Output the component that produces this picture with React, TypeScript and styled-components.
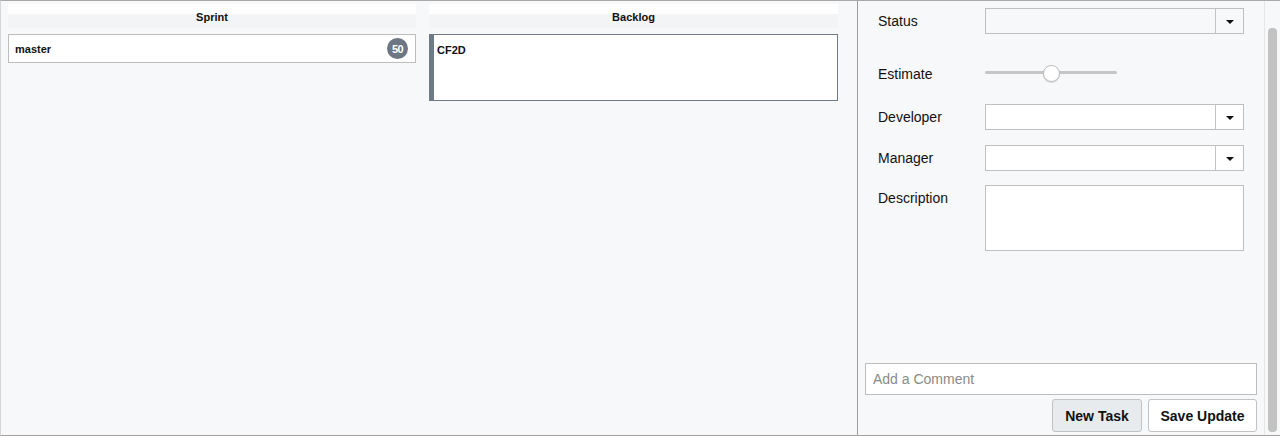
import React from "react";
import styled, { createGlobalStyle } from "styled-components";

const Global = createGlobalStyle`
  html, body { margin: 0; padding: 0; background: #f7f8fa; }
  body { font-family: "Liberation Sans", Arial, Helvetica, sans-serif; color: #111; }
  * { box-sizing: border-box; }
`;

const Frame = styled.div`
  width: 1280px;
  height: 436px;
  display: flex;
  border-top: 1px solid #a9a9a9;
  border-bottom: 1px solid #a3a3a3;
  border-left: 1px solid #d6d6d6;
  background: #f7f8fa;
  overflow: hidden;
`;

const Board = styled.div`
  width: 857px;
  flex: none;
  display: grid;
  grid-template-columns: 408px 409px;
  column-gap: 13px;
  align-content: start;
  padding: 3px 7px;
  border-right: 1px solid #9c9c9c;
`;

const Column = styled.div`
  display: flex;
  flex-direction: column;
  gap: 6px;
`;

const ColumnHeader = styled.div`
  height: 24px;
  display: flex;
  align-items: center;
  justify-content: center;
  padding-top: 2px;
  font-size: 11px;
  font-weight: bold;
  background: linear-gradient(#ffffff 0, #ffffff 42%, #f3f4f6 42%, #f3f4f6 100%);
`;

const Card = styled.div<{ $accent?: boolean; $tall?: boolean }>`
  display: flex;
  align-items: ${(p) => (p.$tall ? "flex-start" : "center")};
  justify-content: space-between;
  height: ${(p) => (p.$tall ? "67px" : "29px")};
  background: #fff;
  border: 1px solid ${(p) => (p.$accent ? "#6e7b87" : "#bdbdbd")};
  border-left: ${(p) => (p.$accent ? "5px solid #6e7b87" : "1px solid #bdbdbd")};
  padding: ${(p) => (p.$tall ? "9px 8px 0 3px" : "0 7px 0 6px")};
  font-size: 11px;
  font-weight: bold;
`;

const Badge = styled.span`
  width: 21px;
  height: 21px;
  border-radius: 50%;
  background: #6c7783;
  color: #fff;
  font-size: 11px;
  font-weight: bold;
  display: flex;
  align-items: center;
  justify-content: center;
  letter-spacing: -0.5px;
`;

const Side = styled.div`
  flex: 1;
  display: flex;
  min-width: 0;
`;

const Panel = styled.div`
  flex: 1;
  display: flex;
  flex-direction: column;
  padding: 0 7px 3px 7px;
`;

const Form = styled.div`
  display: flex;
  flex-direction: column;
  padding-left: 13px;
  padding-right: 13px;
`;

const Row = styled.div<{ $top: number }>`
  display: grid;
  grid-template-columns: 107px 1fr;
  align-items: start;
  margin-top: ${(p) => p.$top}px;
`;

const Label = styled.div`
  font-size: 14px;
  line-height: 26px;
  color: #111;
`;

const Select = styled.div<{ $disabled?: boolean }>`
  height: 26px;
  display: flex;
  border: 1px solid #bfbfbf;
  background: ${(p) => (p.$disabled ? "#f7f8fa" : "#fff")};
`;

const SelectValue = styled.div`
  flex: 1;
`;

const Caret = styled.div`
  width: 28px;
  border-left: 1px solid #c4c4c4;
  display: flex;
  align-items: center;
  justify-content: center;
  &::after {
    content: "";
    border-left: 4px solid transparent;
    border-right: 4px solid transparent;
    border-top: 4px solid #111;
    margin-top: 1px;
  }
`;

const SliderBox = styled.div`
  height: 26px;
  display: flex;
  align-items: center;
`;

const Track = styled.div`
  width: 132px;
  height: 3px;
  border-radius: 2px;
  background: #c6c6c6;
  display: flex;
  align-items: center;
  margin-top: -4px;
`;

const Thumb = styled.div`
  width: 17px;
  height: 17px;
  border-radius: 50%;
  background: #fff;
  border: 1px solid #b9b9b9;
  box-shadow: 0 1px 1px rgba(0, 0, 0, 0.12);
  margin-left: 58px;
  margin-top: 3px;
`;

const TextArea = styled.div`
  height: 66px;
  border: 1px solid #bfbfbf;
  background: #fff;
`;

const Spacer = styled.div`
  flex: 1;
`;

const Comment = styled.div`
  height: 32px;
  border: 1px solid #bdbdbd;
  background: #fff;
  display: flex;
  align-items: center;
  padding-left: 7px;
  font-size: 14px;
  color: #8a8a8a;
`;

const Actions = styled.div`
  display: flex;
  justify-content: flex-end;
  gap: 6px;
  margin-top: 4px;
`;

const Button = styled.div<{ $shade?: boolean; $width: number }>`
  width: ${(p) => p.$width}px;
  height: 33px;
  display: flex;
  align-items: center;
  justify-content: center;
  white-space: nowrap;
  border: 1px solid #c2c2c2;
  border-radius: 3px;
  background: ${(p) => (p.$shade ? "#e8ebee" : "#fff")};
  font-size: 14px;
  font-weight: bold;
  color: #111;
`;

const ScrollTrack = styled.div`
  width: 16px;
  flex: none;
  border-left: 1px solid #e6e6e6;
  padding: 27px 3px 3px 3px;
  display: flex;
`;

const ScrollThumb = styled.div`
  flex: 1;
  border-radius: 4px;
  background: #c2c2c2;
`;

export default function App() {
  return (
    <>
      <Global />
      <Frame>
        <Board>
          <Column>
            <ColumnHeader>Sprint</ColumnHeader>
            <Card>
              <span>master</span>
              <Badge>50</Badge>
            </Card>
          </Column>
          <Column>
            <ColumnHeader>Backlog</ColumnHeader>
            <Card $accent $tall>
              <span>CF2D</span>
            </Card>
          </Column>
        </Board>
        <Side>
          <Panel>
            <Form>
              <Row $top={7}>
                <Label>Status</Label>
                <Select $disabled>
                  <SelectValue />
                  <Caret />
                </Select>
              </Row>
              <Row $top={27}>
                <Label>Estimate</Label>
                <SliderBox>
                  <Track>
                    <Thumb />
                  </Track>
                </SliderBox>
              </Row>
              <Row $top={17}>
                <Label>Developer</Label>
                <Select>
                  <SelectValue />
                  <Caret />
                </Select>
              </Row>
              <Row $top={15}>
                <Label>Manager</Label>
                <Select>
                  <SelectValue />
                  <Caret />
                </Select>
              </Row>
              <Row $top={14}>
                <Label>Description</Label>
                <TextArea />
              </Row>
            </Form>
            <Spacer />
            <Comment>Add a Comment</Comment>
            <Actions>
              <Button $shade $width={90}>New Task</Button>
              <Button $width={109}>Save Update</Button>
            </Actions>
          </Panel>
          <ScrollTrack>
            <ScrollThumb />
          </ScrollTrack>
        </Side>
      </Frame>
    </>
  );
}
